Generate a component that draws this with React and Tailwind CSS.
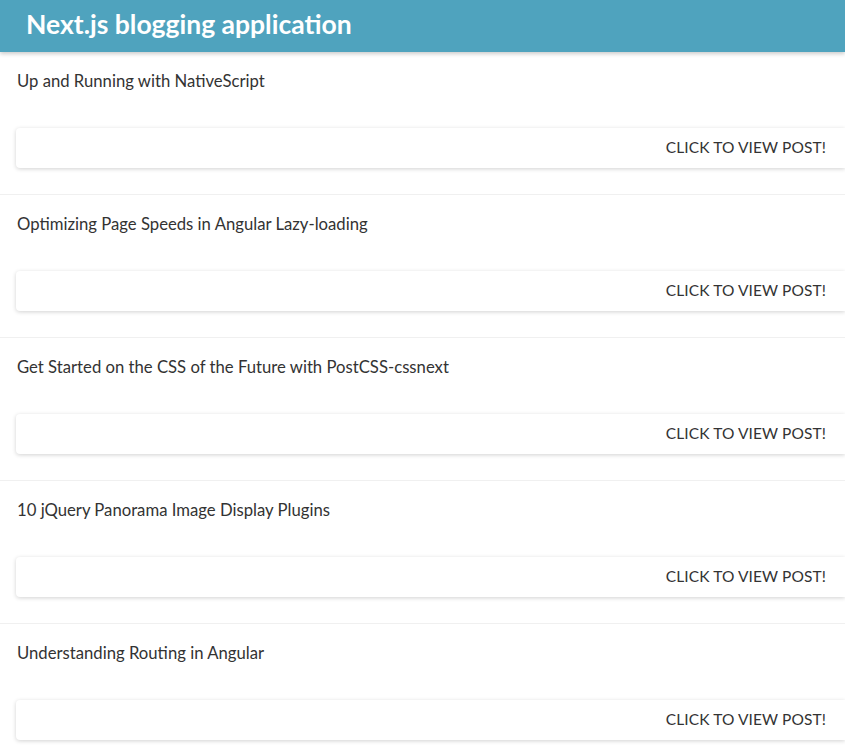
const posts = [
  "Up and Running with NativeScript",
  "Optimizing Page Speeds in Angular Lazy-loading",
  "Get Started on the CSS of the Future with PostCSS-cssnext",
  "10 jQuery Panorama Image Display Plugins",
  "Understanding Routing in Angular",
];

export default function App() {
  return (
    <div className="min-h-screen bg-white font-['Lato',sans-serif] text-[#333]">
      {/* Header */}
      <header className="relative z-10 h-[52px] bg-[#4fa3be] px-[26px] pb-[3px] flex items-center shadow-[0_2px_4px_rgba(0,0,0,0.2)]">
        <h1 className="text-[26.5px] font-bold text-white leading-none">
          Next.js blogging application
        </h1>
      </header>

      {/* Posts */}
      <div>
        {posts.map((title) => (
          <div key={title} className="border-b border-[#f0f0f0] pt-[17px] pb-[26px]">
            <p className="px-[17px] h-6 leading-6 text-[16.7px]">{title}</p>
            <div className="ml-4 mt-[35px] h-10 bg-white flex items-center justify-end pr-[19px] shadow-[0_1px_4px_rgba(0,0,0,0.18)] rounded-l-sm">
              <span className="text-[15.5px] uppercase tracking-[0.1px]">Click to view post!</span>
            </div>
          </div>
        ))}
      </div>
    </div>
  );
}
